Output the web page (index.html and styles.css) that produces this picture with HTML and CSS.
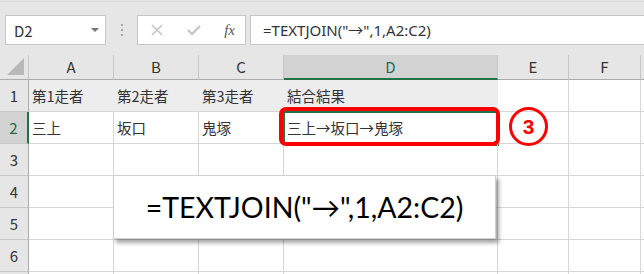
FILE: index.html
```html
<!DOCTYPE html>
<html lang="ja">
<head>
  <meta charset="UTF-8">
  <title>TEXTJOIN</title>
  <link rel="stylesheet" href="styles.css">
</head>
<body>

  <div class="toolbar">
    <div class="namebox">
      <span>D2</span>
      <svg class="caret" width="8" height="5"><polygon points="0,0 8,0 4,4" fill="#777"/></svg>
    </div>
    <div class="grip"><i></i><i></i><i></i></div>
    <div class="fxbuttons">
      <svg width="14" height="14"><path d="M2 2 L12 12 M12 2 L2 12" stroke="#c4c4c4" stroke-width="1.6"/></svg>
      <svg width="16" height="14"><path d="M2 7 L6 11 L14 3" stroke="#c4c4c4" stroke-width="2.2" fill="none"/></svg>
      <span class="fx">fx</span>
    </div>
    <div class="formula">=TEXTJOIN("<span class="cjk">→</span>",1,A2:C2)</div>
  </div>

  <div class="sheet">
    <div class="corner">
      <svg width="18" height="18"><polygon points="17,0 17,17 0,17" fill="#b9b9b9"/></svg>
    </div>
    <div class="colhead">A</div>
    <div class="colhead">B</div>
    <div class="colhead">C</div>
    <div class="colhead active">D</div>
    <div class="colhead">E</div>
    <div class="colhead">F</div>
    <div class="colhead rest"></div>

    <div class="rowhead">1</div>
    <div class="cell fill">第1走者</div>
    <div class="cell fill">第2走者</div>
    <div class="cell fill">第3走者</div>
    <div class="cell fill">結合結果</div>
    <div class="cell"></div>
    <div class="cell"></div>
    <div class="cell"></div>

    <div class="rowhead active">2</div>
    <div class="cell">三上</div>
    <div class="cell">坂口</div>
    <div class="cell">鬼塚</div>
    <div class="cell selected">三上→坂口→鬼塚<span class="handle"></span></div>
    <div class="cell"></div>
    <div class="cell"></div>
    <div class="cell"></div>

    <div class="rowhead">3</div>
    <div class="cell"></div><div class="cell"></div><div class="cell"></div><div class="cell"></div><div class="cell"></div><div class="cell"></div><div class="cell"></div>

    <div class="rowhead">4</div>
    <div class="cell"></div><div class="cell"></div><div class="cell"></div><div class="cell"></div><div class="cell"></div><div class="cell"></div><div class="cell"></div>

    <div class="rowhead">5</div>
    <div class="cell"></div><div class="cell"></div><div class="cell"></div><div class="cell"></div><div class="cell"></div><div class="cell"></div><div class="cell"></div>

    <div class="rowhead">6</div>
    <div class="cell"></div><div class="cell"></div><div class="cell"></div><div class="cell"></div><div class="cell"></div><div class="cell"></div><div class="cell"></div>

    <div class="rowhead"></div>
    <div class="cell"></div><div class="cell"></div><div class="cell"></div><div class="cell"></div><div class="cell"></div><div class="cell"></div><div class="cell"></div>

    <!-- annotations over the sheet -->
    <div class="redbox"></div>
    <div class="badge">3</div>
    <div class="popup">=TEXTJOIN("→",1,A2:C2)</div>
  </div>

</body>
</html>
```

FILE: styles.css
```css
body {
  margin: 0;
  background: #e6e6e6;
  font-family: "Noto Sans CJK JP", "Noto Sans", sans-serif;
  color: #333;
  overflow: hidden;
  width: 644px;
  height: 274px;
}

/* formula bar */
.toolbar {
  display: flex;
  align-items: center;
  height: 30px;
  padding: 13px 0 0 5px;
  border-top: 1px solid #d8d8d8;
  margin-top: 1px;
  box-sizing: content-box;
}

.namebox {
  width: 101px;
  height: 30px;
  box-sizing: border-box;
  background: #fff;
  border: 1px solid #c6c6c6;
  display: flex;
  align-items: center;
  justify-content: space-between;
  padding: 0 6px 0 8px;
  font-size: 15px;
  color: #333;
}

.grip {
  width: 31px;
  display: flex;
  flex-direction: column;
  align-items: center;
  gap: 3px;
}

.grip i {
  width: 2px;
  height: 2px;
  background: #a6a6a6;
}

.fxbuttons {
  width: 109px;
  height: 30px;
  box-sizing: border-box;
  background: #fff;
  border: 1px solid #c6c6c6;
  display: flex;
  align-items: center;
  justify-content: space-between;
  padding: 0 10px 0 12px;
}

.fx {
  font-family: "Liberation Serif", serif;
  font-style: italic;
  font-size: 15px;
  color: #555;
}

.formula {
  flex: 1;
  margin-left: 4px;
  margin-right: -2px;
  height: 30px;
  box-sizing: border-box;
  background: #fff;
  border: 1px solid #c6c6c6;
  padding-left: 12px;
  font-family: "Noto Sans", sans-serif;
  font-size: 15px;
  line-height: 28px;
  color: #333;
  white-space: nowrap;
}

.cjk {
  font-family: "Noto Sans CJK JP", sans-serif;
}

/* worksheet grid */
.sheet {
  position: relative;
  margin-top: 10px;
  display: grid;
  grid-template-columns: 29px 85px 85px 85px 214px 71px 72px 1fr;
  grid-template-rows: 25px repeat(6, 32px) 10px;
  background: #fff;
}

.corner {
  background: #e6e6e6;
  border-right: 1px solid #c8c8c8;
  border-bottom: 1px solid #ababab;
  display: flex;
  align-items: flex-end;
  justify-content: flex-end;
  padding: 0 3px 3px 0;
}

.colhead {
  background: #e6e6e6;
  border-right: 1px solid #c8c8c8;
  border-bottom: 1px solid #ababab;
  text-align: center;
  font-size: 15px;
  line-height: 24px;
  color: #333;
}

.colhead.active {
  background: #d2d2d2;
  border-bottom: 2px solid #217346;
  color: #1f6b42;
}

.rowhead {
  background: #e6e6e6;
  border-right: 1px solid #ababab;
  border-bottom: 1px solid #c8c8c8;
  text-align: center;
  font-size: 15px;
  line-height: 32px;
  color: #333;
}

.rowhead.active {
  background: #d2d2d2;
  border-right: 2px solid #217346;
  color: #1f6b42;
}

.cell {
  position: relative;
  border-right: 1px solid #d6d6d6;
  border-bottom: 1px solid #d6d6d6;
  font-size: 14.5px;
  line-height: 31px;
  padding-left: 3px;
  white-space: nowrap;
}

.cell.fill {
  background: #ededed;
  border-right-color: #ededed;
}

.cell.selected {
  margin: -1px 0 -1px -1px;
  border: 2px solid #217346;
  line-height: 29px;
  padding-left: 2px;
}

.handle {
  position: absolute;
  right: -4px;
  bottom: -4px;
  width: 5px;
  height: 5px;
  background: #217346;
  border: 1px solid #fff;
}

/* annotations */
.redbox {
  position: absolute;
  left: 279px;
  top: 52px;
  width: 221px;
  height: 39px;
  box-sizing: border-box;
  border: 4px solid #f00;
  border-radius: 7px;
}

.badge {
  position: absolute;
  left: 509px;
  top: 52px;
  width: 39px;
  height: 39px;
  box-sizing: border-box;
  border: 3px solid #f00;
  border-radius: 50%;
  color: #f00;
  font-family: "Liberation Sans", sans-serif;
  font-weight: bold;
  font-size: 21px;
  line-height: 33px;
  text-align: center;
}

.popup {
  position: absolute;
  left: 113px;
  top: 120px;
  width: 383px;
  height: 64px;
  box-sizing: border-box;
  background: #fff;
  border: 1px solid #d0d0d0;
  box-shadow: 3px 4px 4px rgba(0, 0, 0, 0.35);
  font-family: Lato, "Noto Sans", sans-serif;
  font-size: 28.5px;
  line-height: 62px;
  text-align: center;
  color: #000;
}
```
